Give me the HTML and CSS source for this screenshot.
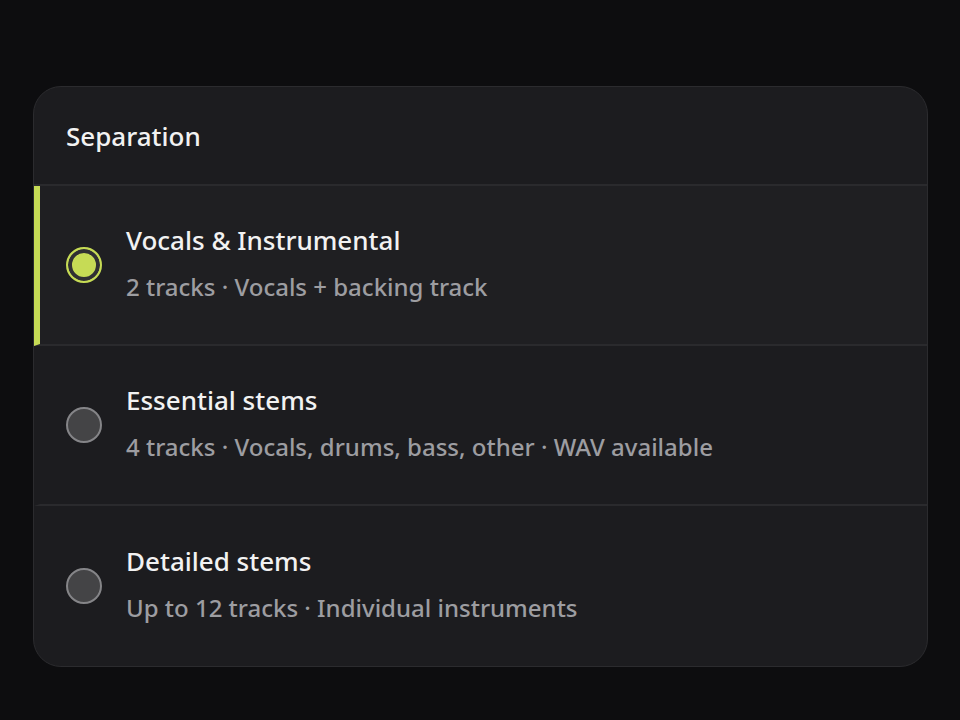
FILE: index.html
```html
<!DOCTYPE html>
<html lang="en">
<head>
    <meta charset="UTF-8">
    <meta name="viewport" content="width=device-width, initial-scale=1.0">
    <title>Separation</title>
    <link rel="stylesheet" href="styles.css">
</head>
<body>
    <!-- Separation options card -->
    <section class="card">
        <header class="card-header">Separation</header>
        <ul class="option-list">
            <li class="option selected">
                <span class="radio"></span>
                <div class="option-text">
                    <div class="option-title">Vocals &amp; Instrumental</div>
                    <div class="option-desc">2 tracks · Vocals + backing track</div>
                </div>
            </li>
            <li class="option">
                <span class="radio"></span>
                <div class="option-text">
                    <div class="option-title">Essential stems</div>
                    <div class="option-desc">4 tracks · Vocals, drums, bass, other · WAV available</div>
                </div>
            </li>
            <li class="option">
                <span class="radio"></span>
                <div class="option-text">
                    <div class="option-title">Detailed stems</div>
                    <div class="option-desc">Up to 12 tracks · Individual instruments</div>
                </div>
            </li>
        </ul>
    </section>
</body>
</html>
```

FILE: styles.css
```css
/* General Styles */
body {
    margin: 0;
    background: #0d0d0f;
    font-family: 'Noto Sans', sans-serif;
    color: #f2f2f2;
    padding: 86px 32px 0 33px;
}

/* Card */
.card {
    background: #1c1c1f;
    border: 1px solid #2b2b2e;
    border-radius: 28px;
    overflow: hidden;
    width: 893px;
}

.card-header {
    height: 97px;
    display: flex;
    align-items: center;
    padding-left: 32px;
    font-size: 26px;
    font-weight: 500;
    border-bottom: 2px solid #2a2a2d;
}

/* Options */
.option-list {
    list-style: none;
    margin: 0;
    padding: 0;
}

.option {
    height: 158px;
    display: flex;
    align-items: center;
    gap: 24px;
    padding-left: 26px;
    border-left: 6px solid transparent;
    border-bottom: 2px solid #2a2a2d;
}

.option:last-child {
    border-bottom: none;
    height: 160px;
}

.option.selected {
    border-left-color: #c6db55;
    background: #1f1f22;
}

.radio {
    width: 32px;
    height: 32px;
    border-radius: 50%;
    border: 2px solid #858588;
    background: #444446;
    flex-shrink: 0;
}

.option.selected .radio {
    border-color: #c6db55;
    background: #c6db55;
    box-shadow: inset 0 0 0 4px #303033;
}

.option-text {
    padding-bottom: 4px;
}

.option-title {
    font-size: 26px;
    font-weight: 500;
    line-height: 32px;
}

.option-desc {
    font-size: 24px;
    font-weight: 500;
    color: #9d9da1;
    line-height: 30px;
    margin-top: 16px;
}
```
